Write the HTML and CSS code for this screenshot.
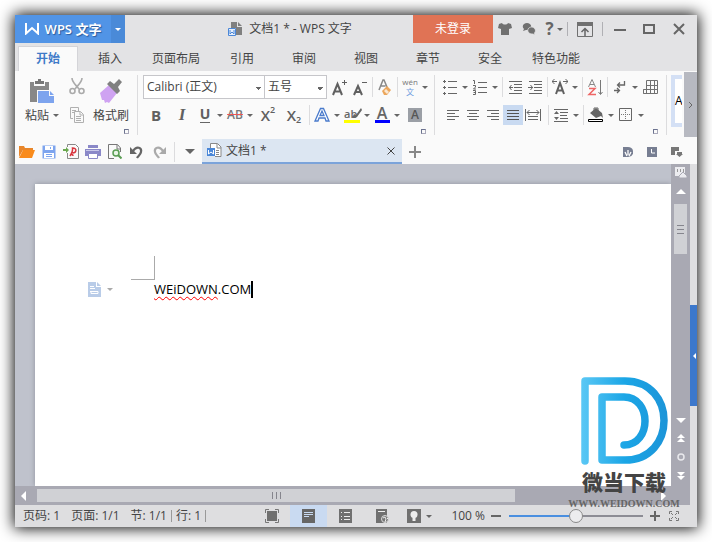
FILE: index.html
```html
<!DOCTYPE html>
<html lang="zh-CN">
<head>
<meta charset="utf-8">
<meta name="viewport" content="width=device-width, initial-scale=1">
<title>文档1 * - WPS 文字</title>
<link rel="stylesheet" href="styles.css">
</head>
<body>
<div class="window">
  <header class="titlebar">
    <button class="brand"><svg width="14" height="12" viewBox="0 0 14 12"><path d="M1 0v10.500L7 5l6 5.500V0" fill="none" stroke="#fff" stroke-width="2"/></svg>WPS 文字</button>
    <button class="brand-menu" aria-label="菜单"><span class="caret light"></span></button>
    <div class="doc-title">
      <svg width="15" height="15" viewBox="0 0 15 15"><path d="M3 0h6v5h5v8H8V6H3z" fill="#808080"/><path d="M10 0l4 4h-4z" fill="#808080"/><path d="M.5 6.500h7v7h-7z" fill="#e8effa" stroke="#4a87d8"/><path d="M2 8v4l2-2 2 2V8" fill="none" stroke="#4a87d8"/></svg>
      <span>文档1 * - WPS 文字</span>
    </div>
    <button class="login">未登录</button>
    <button class="win-btn" aria-label="皮肤"><svg width="14" height="14" viewBox="0 0 14 14"><path d="M4 1C5 3 9 3 10 1l3 1 1 4-3 1v6H3V7L0 6l1-4z" fill="#707070"/></svg></button>
    <button class="win-btn" aria-label="消息"><svg width="14" height="14" viewBox="0 0 14 14"><path d="M1 9l1-2C-1 4 2 1 5 1s6 3 3 6c-2 1-3 1-4 1z" fill="#707070"/><path d="M13 13l-.5-2C15 8 12 5 9.500 5S4 8 7 11c1 1 3 1 4 1z" fill="#707070" stroke="#e3e3e5" stroke-width=".8"/></svg></button>
    <button class="win-btn help" aria-label="帮助"><b>?</b><span class="caret"></span></button>
    <i class="title-sep"></i>
    <button class="win-btn wide" aria-label="隐藏功能区"><svg width="16" height="15" viewBox="0 0 16 15"><path d="M.5.5h15v14H.5z" fill="none" stroke="#707070"/><path d="M0 0h16v4H0z" fill="#707070"/><path d="M8 14V7M4.500 10L8 6.500l3.500 3.500" fill="none" stroke="#666" stroke-width="1.500"/></svg></button>
    <i class="title-sep"></i>
    <button class="win-btn wide" aria-label="最小化"><svg width="12" height="12"><path d="M0 6h12v2H0z" fill="#666"/></svg></button>
    <button class="win-btn" aria-label="最大化"><svg width="12" height="12"><path d="M1 2h10v8H1z" fill="none" stroke="#666" stroke-width="2"/></svg></button>
    <button class="win-btn close" aria-label="关闭"><svg width="12" height="12"><path d="M1 1l10 10M11 1L1 11" stroke="#666" stroke-width="2"/></svg></button>
  </header>

  <nav class="tabs">
    <button class="tab active">开始</button><button class="tab">插入</button><button class="tab long">页面布局</button><button class="tab">引用</button><button class="tab">审阅</button><button class="tab">视图</button><button class="tab">章节</button><button class="tab">安全</button><button class="tab long">特色功能</button>
  </nav>

  <section class="ribbon">
    <div class="group clipboard">
      <button class="big">
        <svg width="26" height="25" viewBox="0 0 26 25"><path d="M1 3h4v4h11V3h4v8H8v12H1z" fill="#888"/><path d="M6 2h3V0h3v2h3v3H6z" fill="#777"/><path d="M9 12h11v5h5v7H9z" fill="#7da4ee"/><path d="M21 12l4 4h-4z" fill="#7da4ee"/></svg>
        <span>粘贴<span class="caret"></span></span>
      </button>
      <div class="stack">
        <button aria-label="剪切"><svg width="16" height="17" viewBox="0 0 16 17"><g fill="none" stroke="#aaa" stroke-width="1.600"><path d="M3 0c0 4 3 6 7 11M13 0c0 4-3 6-7 11"/><circle cx="3.500" cy="13" r="2.500"/><circle cx="12.500" cy="13" r="2.500"/></g></svg></button>
        <button aria-label="复制"><svg width="16" height="17" viewBox="0 0 16 17"><g fill="none" stroke="#b0b0b0"><path d="M4 11.500H1.500v-11h8V4"/><path d="M5.500 4.500h6l3 3v8h-9zM11 5v3h3M7 9.500h5M7 11.500h5M7 13.500h5M3 3.500h4M3 5.500h2"/></g></svg></button>
      </div>
      <button class="big painter">
        <svg width="26" height="25" viewBox="0 0 26 25"><path d="M2 14l9-8 8 8-8 10-2-1-2 1-1-3-2 0z" fill="#cfa3f2"/><path d="M9 5l3-3 4 3 5-5 3 3-4 5 2 4-3 3z" fill="#808080"/></svg>
        <span>格式刷</span>
      </button>
      <i class="launcher"></i>
    </div>

    <div class="group font">
      <div class="row">
        <select class="field font-name" aria-label="字体"><option>Calibri (正文)</option></select><select class="field font-size" aria-label="字号"><option>五号</option></select>
        <button class="tool gap-s" aria-label="增大字号"><svg width="16" height="17"><path d="M1 16L5.500 5 10 16M3 12.500h5" fill="none" stroke="#606060" stroke-width="2"/><path d="M10 3.500h5M12.500 1v5" stroke="#606060"/></svg></button>
        <button class="tool" aria-label="减小字号"><svg width="16" height="17"><path d="M2 16L6 7l4 9M4 13h4" fill="none" stroke="#606060" stroke-width="2"/><path d="M10 3.500h5" stroke="#606060"/></svg></button>
        <i class="sep"></i>
        <button class="tool" aria-label="清除格式"><svg width="16" height="17" viewBox="0 0 16 17"><path d="M2 11L6 1h1l3 7M3.500 7h5" fill="none" stroke="#888" stroke-width="1.500"/><path d="M5 12l5-5 4 4-4 5H7z" fill="#eba65c"/><path d="M7 12l2-2 3 3-2 2z" fill="#fbe8d2"/></svg></button>
        <i class="sep"></i>
        <button class="tool" aria-label="拼音指南"><span class="pinyin"><span>wén</span><b>文</b></span></button>
        <button class="drop" aria-label="拼音选项"><span class="caret"></span></button>
      </div>
      <div class="row second">
        <button class="tool gap-s" aria-label="加粗"><b class="letter">B</b></button>
        <button class="tool gap-m" aria-label="倾斜"><span class="letter italic">I</span></button>
        <button class="tool gap-s" aria-label="下划线"><span class="letter under">U</span></button>
        <button class="drop" aria-label="下划线选项"><span class="caret"></span></button>
        <button class="tool" aria-label="删除线"><span class="strike">AB</span></button>
        <button class="drop" aria-label="删除线选项"><span class="caret"></span></button>
        <button class="tool gap-s" aria-label="上标"><span class="letter script">X<sup>2</sup></span></button>
        <button class="tool gap-m" aria-label="下标"><span class="letter script">X<sub>2</sub></span></button>
        <i class="sep gap-s"></i>
        <button class="tool" aria-label="文字效果"><svg width="16" height="16"><path d="M1 14L6.500 1.500h3L15 14h-3l-1-3H5l-1 3zM6 8.500h4L8 4z" fill="#fff" stroke="#4a7bcc" stroke-width="1.300"/></svg></button>
        <button class="drop" aria-label="文字效果选项"><span class="caret"></span></button>
        <button class="tool" aria-label="突出显示"><span class="mark">ab<svg width="10" height="11"><path d="M9 0l1 2-5 7-3 1H0l2-4 2 1z" fill="#666"/></svg></span></button>
        <button class="drop" aria-label="突出显示选项"><span class="caret"></span></button>
        <button class="tool" aria-label="字体颜色"><span class="color">A</span></button>
        <button class="drop" aria-label="字体颜色选项"><span class="caret"></span></button>
        <button class="tool gap-s" aria-label="字符底纹"><span class="shade">A</span></button>
      </div>
      <i class="launcher"></i>
    </div>

    <div class="group para">
      <div class="row">
        <button class="tool" aria-label="项目符号"><svg width="16" height="16"><path d="M6 2.500h9M6 8.500h9M6 14.500h9" stroke="#666"/><path d="M1 2.500h3M2.500 1v3M1 8.500h3M2.500 7v3M1 14.500h3M2.500 13v3" stroke="#666"/></svg></button>
        <button class="drop" aria-label="项目符号选项"><span class="caret"></span></button>
        <button class="tool" aria-label="编号"><svg width="16" height="17"><path d="M6 3.500h9M6 8.500h9M6 13.500h9" stroke="#666"/><path d="M1 1.500h1.500V5M1 6.500h2.500v1.500l-2 2h2.500M1 11.500h2.500v4H1M1.500 13.500h2" fill="none" stroke="#666"/></svg></button>
        <button class="drop" aria-label="编号选项"><span class="caret"></span></button>
        <i class="sep"></i>
        <button class="tool" aria-label="减少缩进"><svg width="14" height="14"><path d="M1 1.500h13M6 4.500h8M6 7.500h8M6 10.500h8M1 13.500h13M1 7.500h4M3.500 5l-2 2.500 2 2.500" fill="none" stroke="#666"/></svg></button>
        <button class="tool" aria-label="增加缩进"><svg width="14" height="14"><path d="M1 1.500h13M6 4.500h8M6 7.500h8M6 10.500h8M1 13.500h13M0 7.500h5M2.500 5l2 2.500-2 2.500" fill="none" stroke="#666"/></svg></button>
        <i class="sep"></i>
        <button class="tool" aria-label="中文版式"><svg width="16" height="16"><path d="M4 15L8 4l4 11M5 11.500h6" fill="none" stroke="#606060" stroke-width="2"/><path d="M0 2.500h5M2.500 0L0 2.500 2.500 5M11 2.500h5M13.500 0L16 2.500 13.500 5" fill="none" stroke="#666"/></svg></button>
        <button class="drop" aria-label="中文版式选项"><span class="caret"></span></button>
        <i class="sep"></i>
        <button class="tool" aria-label="排序"><svg width="16" height="17"><path d="M1.500 8L5 .5 8.500 8M3 5.500h4" fill="none" stroke="#888"/><path d="M2 9.500h6L2 15.500h7" fill="none" stroke="#e66" stroke-width="1.500"/><path d="M13.500 1v14M11.500 13l2 2.500 2-2.500" fill="none" stroke="#777"/></svg></button>
        <i class="sep"></i>
        <button class="tool" aria-label="显示标记"><svg width="14" height="14"><path d="M11.500 1v4H5M7 2.500L4.500 5 7 7.500M1 10.500h5M4 8l2.500 2.500L4 13" fill="none" stroke="#666" stroke-width="1.300"/></svg></button>
        <button class="drop" aria-label="显示标记选项"><span class="caret"></span></button>
        <button class="tool" aria-label="插入表格"><svg width="15" height="15"><path d="M3.500.5h11v13H.5v-4h14M3.500 13V.5M7.500 0v13M11.500 0v13M3 5.500h12M.5 9.500v4" fill="none" stroke="#707070"/></svg></button>
      </div>
      <div class="row second">
        <button class="tool gap-s" aria-label="左对齐"><svg width="14" height="12"><path d="M1 1.500h12M1 4.500h8M1 7.500h12M1 10.500h8" stroke="#666"/></svg></button>
        <button class="tool" aria-label="居中"><svg width="14" height="12"><path d="M1 1.500h12M3 4.500h8M1 7.500h12M3 10.500h8" stroke="#666"/></svg></button>
        <button class="tool" aria-label="右对齐"><svg width="14" height="12"><path d="M1 1.500h12M5 4.500h8M1 7.500h12M5 10.500h8" stroke="#666"/></svg></button>
        <button class="tool on" aria-label="两端对齐"><svg width="14" height="12"><path d="M1 1.500h12M1 4.500h12M1 7.500h12M1 10.500h12" stroke="#555"/></svg></button>
        <button class="tool" aria-label="分散对齐"><svg width="16" height="12"><path d="M.5 0v12M15.500 0v12M3 7.500h10M3 10.500h10M2 3.500h12M4.500 1L2 3.500 4.500 6M11.500 1L14 3.500 11.500 6" fill="none" stroke="#666"/></svg></button>
        <i class="sep gap-s"></i>
        <button class="tool" aria-label="行距"><svg width="14" height="14"><path d="M0 1.500h14M6 4.500h8M6 7.500h7M6 10.500h8M0 13.500h14" stroke="#666"/><path d="M0 6l2.500-3L5 6zM0 9h5l-2.500 3z" fill="#666"/></svg></button>
        <button class="drop" aria-label="行距选项"><span class="caret"></span></button>
        <i class="sep"></i>
        <button class="tool" aria-label="底纹颜色"><svg width="16" height="16"><path d="M2 6l6-5 6 5 1 5-2-2-5 2z" fill="#666"/><path d="M6 4V1h4v3" fill="none" stroke="#666"/><path d="M.5 12.500h14v2H.5z" fill="#fff" stroke="#000"/></svg></button>
        <button class="drop" aria-label="底纹选项"><span class="caret"></span></button>
        <button class="tool" aria-label="边框"><svg width="14" height="14"><path d="M.5.5h12v12H.5z" fill="none" stroke="#666"/><path d="M6.500 2v10M2 6.500h10" stroke="#777" stroke-dasharray="1 1"/></svg></button>
        <button class="drop" aria-label="边框选项"><span class="caret"></span></button>
      </div>
      <i class="launcher"></i>
    </div>
    <div class="styles"><button>A</button></div>
    <button class="ribbon-next" aria-label="更多"><svg width="5" height="8"><path d="M1 1l3 3-3 3" fill="none" stroke="#666"/></svg></button>
  </section>

  <div class="quickbar">
    <button class="quick" aria-label="打开"><svg width="16" height="14"><path d="M0 12V1h5l1 2h8v2H4z" fill="#e8862a"/><path d="M4 5h12l-3 8H0z" fill="#f98b1c"/></svg></button>
    <button class="quick" aria-label="保存"><svg width="14" height="14"><path d="M.5.500h13v13H.5z" fill="#7da4ee"/><path d="M3 1h8v4H3zM2 8h10v5H2z" fill="#fff"/><path d="M4 9.500h6M4 11.500h6M8.500 2v2" stroke="#7da4ee"/></svg></button>
    <button class="quick" aria-label="输出为PDF"><svg width="16" height="15"><path d="M4.500 3V.5h8l3 3v11h-11V9" fill="none" stroke="#888"/><path d="M0 5h3V3l3 3-3 3V7H0z" fill="#6aa84f"/><path d="M7 12c2-3 3-5 2.500-8 5 0 4 5 0 5M7 12c1-2 3-2 3 0" fill="none" stroke="#d9363e" stroke-width="1.500"/></svg></button>
    <button class="quick" aria-label="打印"><svg width="16" height="14"><path d="M3 0h10v3H3zM0 4h16v7H0z" fill="#8a88c8"/><path d="M3.500 8.500h9v5h-9z" fill="#fff" stroke="#8a88c8"/><path d="M1 5.500h13" stroke="#c8c8ea"/></svg></button>
    <button class="quick" aria-label="打印预览"><svg width="14" height="15"><path d="M12.500 8V4l-3-3.500H.5v14H6" fill="none" stroke="#777"/><path d="M9 1v4h4" fill="none" stroke="#777"/><circle cx="8" cy="9" r="3" fill="#eaf6e8" stroke="#5a9e54" stroke-width="1.500"/><path d="M10 11l3.500 3.500" stroke="#5a9e54" stroke-width="2"/></svg></button>
    <button class="quick" aria-label="撤销"><svg width="14" height="14"><path d="M3 6c4-6 9-3 8 1-.5 3-3 4-4 6" fill="none" stroke="#666" stroke-width="2.200"/><path d="M0 2v7h7z" fill="#666"/></svg></button>
    <button class="quick" aria-label="恢复"><svg width="14" height="14"><path d="M11 6C7 0 2 3 3 7c.5 3 3 4 4 6" fill="none" stroke="#aaa" stroke-width="2.200"/><path d="M14 2v7H7z" fill="#aaa"/></svg></button>
    <i class="sep quick-sep"></i>
    <button class="quick more" aria-label="自定义"><span class="caret large"></span></button>
    <div class="doc-tab">
      <svg width="15" height="15"><path d="M3.500 6V.5h7l3.500 3.500v9.500H8" fill="#fff" stroke="#888"/><path d="M10 1v4h4M9 7.500h3M9 9.500h3M9 11.500h3" fill="none" stroke="#888"/><path d="M0 5h8v8H0z" fill="#4a87d8"/><path d="M1.500 7v4L4 9l2.500 2V7" fill="none" stroke="#fff"/></svg>
      <span>文档1 *</span>
      <button aria-label="关闭文档"><svg width="8" height="8"><path d="M.5.5l7 7M7.500.5l-7 7" stroke="#444"/></svg></button>
    </div>
    <button class="new-tab" aria-label="新建"><svg width="12" height="12"><path d="M6 0v12M0 6h12" stroke="#888" stroke-width="2"/></svg></button>
    <div class="quick-right">
      <button aria-label="文档漫游"><svg width="10" height="10"><path d="M0 0h5c7 0 7 10 0 10H0z" fill="#777e92"/><path d="M4 9L2 5M5 8V3M6 9l2-4" stroke="#fff" stroke-width="1.300"/></svg></button>
      <button aria-label="历史"><svg width="10" height="10"><path d="M0 0h10v10H0z" fill="#777e92"/><path d="M4.500 2v4H8" fill="none" stroke="#fff"/></svg></button>
      <button aria-label="窗口列表"><svg width="12" height="10"><path d="M0 0h8v4H4v4H0z" fill="#777"/><path d="M6 5h5v2h1l-3.500 3L5 7h1z" fill="#777"/></svg></button>
    </div>
  </div>

  <main class="workspace">
    <div class="canvas">
      <article class="page">
        <div class="corner"></div>
        <div class="line">
          <button class="para-menu" aria-label="段落布局"><svg width="13" height="15"><path d="M0 0h8v5h5v10H0z" fill="#b9cce8"/><path d="M9 0l4 4H9z" fill="#b9cce8"/><path d="M2 4.500h4M2 6.500h5M2 9.500h8v2H3v-2" fill="none" stroke="#fff"/></svg><span class="caret faint"></span></button>
          <p><span class="typo">WEiDOWN</span>.COM<span class="cursor"></span></p>
        </div>
      </article>
    </div>
    <div class="vscroll">
      <svg class="ruler" width="14" height="14"><path d="M1 1h10v9H1z" fill="#ececf0"/><path d="M3.500 3v3M6.500 3v3M9.500 3v3" stroke="#999"/><path d="M5 10l4-4 4 4v2H5z" fill="#ececf0" stroke="#a9a9b3"/></svg>
      <svg width="10" height="5"><path d="M5 0l5 5H0z" fill="#fff"/></svg>
      <div class="vthumb"></div>
      <div class="vtools">
        <svg width="10" height="5"><path d="M0 0h10L5 5z" fill="#fff"/></svg>
        <svg width="8" height="8"><path d="M4 0l4 4H0zM4 4l4 4H0z" fill="#fff"/></svg>
        <svg width="8" height="8"><circle cx="4" cy="4" r="3" fill="none" stroke="#e8e8ec" stroke-width="1.500"/></svg>
        <svg width="8" height="8"><path d="M0 0h8L4 4zM0 4h8L4 8z" fill="#fff"/></svg>
      </div>
    </div>
    <div class="side"><button aria-label="展开任务窗格"><svg width="4" height="6"><path d="M4 0v6L1 3z" fill="#fff"/></svg></button></div>
    <div class="hscroll">
      <svg width="5" height="10"><path d="M5 0v10L0 5z" fill="#fff"/></svg>
      <div class="htrack"><div class="hthumb"></div></div>
      <svg width="5" height="10"><path d="M0 0v10l5-5z" fill="#fff"/></svg>
    </div>
  </main>

  <footer class="status">
    <div class="info"><span>页码: 1</span><span>页面: 1/1</span><span class="bar">节: 1/1</span><span class="bar tight">行: 1</span></div>
    <div class="views">
      <button aria-label="全屏显示"><svg width="14" height="14"><path d="M2 2h10v10H2z" fill="#707070"/><path d="M.5 4V.5H4M10 .5h3.500V4M13.500 10v3.500H10M4 13.500H.5V10" fill="none" stroke="#777"/></svg></button>
      <button class="on" aria-label="页面视图"><svg width="13" height="14"><path d="M0 0h13v14H0z" fill="#666"/><path d="M2 3.500h9M2 5.500h9M2 7.500h5" stroke="#c8daf2"/></svg></button>
      <button aria-label="大纲"><svg width="13" height="14"><path d="M0 0h13v14H0z" fill="#707070"/><path d="M2 3.500h1M5 3.500h6M2 7.500h1M5 7.500h6M2 10.500h1M5 10.500h6" stroke="#eee"/></svg></button>
      <button aria-label="Web版式"><svg width="13" height="14"><path d="M0 0h11v14H0z" fill="#707070"/><path d="M2 2.500h7" stroke="#eee"/><circle cx="9" cy="10" r="3.500" fill="#777" stroke="#ddd"/><path d="M7 9l2-1 1 2-1 3M11 9l1 1" fill="none" stroke="#eee"/></svg></button>
      <button aria-label="护眼模式"><svg width="14" height="14"><path d="M0 0h14v14H0z" fill="#707070"/><circle cx="7" cy="5.500" r="3.500" fill="#eee"/><path d="M5.500 8h3v4h-3z" fill="#eee"/></svg><span class="caret"></span></button>
    </div>
    <label class="zoom-label" for="zoom">100 %</label>
    <button class="zoom-btn" aria-label="缩小"><svg width="10" height="10"><path d="M0 5h10" stroke="#666" stroke-width="2"/></svg></button>
    <input id="zoom" class="zoom" type="range" min="0" max="200" value="100">
    <button class="zoom-btn" aria-label="放大"><svg width="10" height="10"><path d="M5 0v10M0 5h10" stroke="#666" stroke-width="2"/></svg></button>
    <button class="zoom-btn" aria-label="最佳缩放"><svg width="10" height="10"><path d="M.5 3V.5H3M7 .5h2.500V3M9.500 7v2.500H7M3 9.500H.5V7M2 2l2 2M8 2L6 4M2 8l2-2M8 8L6 6" fill="none" stroke="#777"/></svg></button>
  </footer>

  <div class="watermark">
    <svg width="87" height="88" viewBox="0 0 87 88"><defs><linearGradient id="blue" gradientUnits="userSpaceOnUse" x1="0" x2="87" y1="0" y2="0"><stop offset="0" stop-color="#5bc8f5"/><stop offset=".5" stop-color="#1ba6e6"/><stop offset="1" stop-color="#1c94d8"/></linearGradient></defs><path d="M4 84V4h40c52 0 52 79 0 79H21V20h22c28 0 28 48 0 48" fill="none" stroke="url(#blue)" stroke-width="7.500" stroke-linecap="round" stroke-linejoin="round"/></svg>
    <strong>微当下载</strong>
    <span>WWW.WEIDOWN.COM</span>
  </div>
</div>
</body>
</html>
```
FILE: styles.css
```css
* { box-sizing: border-box; }
body {
  margin: 0;
  padding: 15px;
  background: #fff;
  color: #444;
  font: 12px/16px "Open Sans", "Noto Sans CJK SC", sans-serif;
}
button {
  display: flex;
  align-items: center;
  justify-content: center;
  flex: none;
  margin: 0;
  padding: 0;
  border: 0;
  background: none;
  color: inherit;
  font: inherit;
}
svg { display: block; flex: none; }
.window {
  position: relative;
  display: flex;
  flex-direction: column;
  min-height: calc(100vh - 30px);
  background: #fafafa;
  box-shadow: 0 0 14px 1px #000;
}
.caret {
  display: inline-block;
  flex: none;
  border: 3px solid transparent;
  border-top-color: #666;
  border-bottom: 0;
}
.caret.light { border-top-color: #fff; }
.caret.faint { border-top-color: #aaa; }
.caret.large { border-width: 5px 5px 0; }

/* title bar */
.titlebar { display: flex; align-items: center; height: 28px; background: #e3e3e5; }
.brand {
  width: 96px;
  height: 28px;
  gap: 6px;
  background: #5194e6;
  color: #fff;
  font-size: 13px;
  font-weight: 600;
  text-shadow: 1px 1px 1px #2c5c9c;
}
.brand-menu { width: 14px; height: 28px; background: #4a8ad8; }
.doc-title { display: flex; flex: 1; align-items: center; justify-content: center; gap: 6px; padding-left: 42px; white-space: nowrap; }
.login { width: 80px; height: 28px; background: #e07355; color: #fff; }
.win-btn { width: 24px; height: 28px; }
.win-btn.wide { width: 32px; }
.win-btn.close { width: 36px; }
.win-btn.help { gap: 3px; width: 26px; font-size: 17px; color: #666; }
.title-sep { width: 1px; height: 14px; background: #b0b0b4; }
.title-sep + .wide { width: 34px; }

/* tabs */
.tabs { display: flex; height: 28px; padding: 3px 2px 0; background: #e3e3e5; }
.tab { width: 62px; height: 25px; }
.tab.long { width: 70px; }
.tab.active { width: 60px; margin: 0 1px; border: 1px solid #d4d4d8; border-bottom: 0; background: #fafafa; color: #3f7bc8; font-weight: 600; }

/* ribbon */
.ribbon { display: flex; height: 68px; overflow: hidden; }
.group { position: relative; flex: none; height: 60px; margin-top: 4px; border-right: 1px solid #dcdcde; }
.launcher { position: absolute; right: 8px; bottom: 1px; width: 5px; height: 5px; border: 1px solid #6c7390; border-right-color: #aab; border-bottom-color: #aab; }
.clipboard { display: flex; width: 123px; padding-left: 6px; }
.big { flex-direction: column; justify-content: flex-start; width: 42px; padding-top: 4px; gap: 4px; white-space: nowrap; }
.big .caret { margin: 0 0 3px 4px; }
.painter { margin-left: 5px; }
.stack { display: flex; flex-direction: column; gap: 12px; width: 22px; padding-top: 3px; align-items: flex-end; }
.font { width: 297px; padding-left: 5px; }
.para { width: 232px; padding-left: 5px; }
.row { display: flex; align-items: center; height: 24px; }
.second { margin-top: 6px; height: 20px; }
.field {
  appearance: none;
  height: 24px;
  margin: 0;
  padding: 0 14px 0 3px;
  border: 1px solid #c6c6ca;
  border-radius: 0;
  background: linear-gradient(45deg, transparent 50%, #666 50%) right 6px top 11px / 3px 3px no-repeat, linear-gradient(315deg, transparent 50%, #666 50%) right 3px top 11px / 3px 3px no-repeat, #fff;
  color: #444;
  font: inherit;
}
.font-name { width: 122px; }
.font-size { width: 62px; border-left: 0; }
.tool { width: 20px; height: 20px; }
.tool.on { background: #c9daf1; }
.drop { width: 10px; height: 20px; }
.gap-s { margin-left: 3px; }
.gap-m { margin-left: 6px; }
.sep { flex: none; width: 5px; height: 20px; background: linear-gradient(#dcdcde, #dcdcde) center / 1px 100% no-repeat; }
.letter { color: #606060; font-size: 15px; font-weight: 700; line-height: 20px; white-space: nowrap; }
.script { display: flex; font-weight: 600; }
.letter sup, .letter sub { font-size: 9px; line-height: 10px; }
.letter sup { align-self: flex-start; }
.letter sub { align-self: flex-end; }
.italic { font-family: "Liberation Serif", serif; font-style: italic; font-size: 17px; }
.under { height: 16px; border-bottom: 1px solid #666; font-size: 14px; line-height: 14px; }
.strike { color: #777; font-weight: 600; font-size: 12px; text-decoration: line-through #e55; }
.mark { display: flex; align-items: center; width: 16px; border-bottom: 3px solid #ff0; color: #666; font-weight: 600; font-size: 11px; line-height: 13px; }
.mark svg { margin-left: -5px; }
.color { width: 15px; border-bottom: 3px solid #00f; color: #666; font-weight: 600; font-size: 16px; line-height: 13px; }
.shade { width: 14px; height: 14px; background: #9b9fa6; color: #555; font-weight: 600; line-height: 14px; }
.pinyin { display: flex; flex-direction: column; align-items: center; color: #777; font-size: 8px; line-height: 10px; }
.pinyin b { color: #6d9ae0; font-weight: 400; }
.styles { flex: 1; min-width: 0; margin: 4px 2px 12px 4px; padding: 4px 0 4px 4px; overflow: hidden; background: #d4e0f5; }
.styles button { width: 100%; height: 100%; justify-content: flex-start; background: #fff; color: #000; }
.ribbon-next { width: 13px; height: 65px; margin-top: 1px; background: #b7b9c1; }

/* quick access and document tabs */
.quickbar { display: flex; align-items: center; height: 25px; padding-left: 1px; }
.quick { width: 22px; height: 25px; }
.quick-sep { height: 20px; margin-left: 2px; }
.quick.more { width: 25px; }
.doc-tab { display: flex; align-items: center; gap: 4px; flex: 0 1 200px; height: 25px; padding: 0 6px 0 5px; border-bottom: 2px solid #7ba3da; background: #dce6f2; }
.doc-tab button { width: 10px; margin-left: auto; }
.new-tab { width: 26px; height: 25px; }
.quick-right { display: flex; gap: 14px; margin-left: auto; padding-right: 14px; }

/* document area */
.workspace { display: grid; flex: 1; grid-template: minmax(0, 1fr) 19px / minmax(0, 1fr) 19px 7px; }
.canvas { padding: 20px 0 0 20px; overflow: hidden; background: #bfc2cc; }
.page { height: 100%; padding-top: 72px; background: #fff; box-shadow: 0 0 5px #8f929c; }
.corner { width: 24px; height: 24px; margin-left: 96px; border: solid #aaa; border-width: 0 1px 1px 0; }
.line { display: flex; align-items: center; margin: 1px 0 0 53px; }
.para-menu { justify-content: flex-start; width: 66px; gap: 6px; }
.line p { display: flex; margin: 0; color: #000; font-size: 13px; line-height: 17px; }
.typo { text-decoration: underline wavy #f00 1px; text-underline-offset: 2px; text-decoration-skip-ink: none; }
.cursor { width: 2px; height: 17px; background: #000; }
.vscroll { display: flex; flex-direction: column; align-items: center; background: #a9a9b3; }
.ruler { margin: 2px 0 9px; }
.vthumb { width: 13px; height: 50px; margin-top: 10px; background: repeating-linear-gradient(#85858d 0 1px, transparent 1px 4px) center / 7px 9px no-repeat, #d0d1d5; }
.vtools { display: flex; flex-direction: column; align-items: center; gap: 11px; margin: auto 0 6px; }
.side { grid-row: 1 / 3; grid-column: 3; display: flex; align-items: center; padding-top: 42px; background: #dedee0; }
.side button { width: 7px; height: 101px; background: #3c78cc; }
.hscroll { display: flex; align-items: center; grid-column: 1 / 3; gap: 11px; padding: 0 24px 0 6px; background: #a9a9b3; }
.htrack { flex: 1; }
.hthumb { width: 78%; height: 13px; background: repeating-linear-gradient(90deg, #85858d 0 1px, transparent 1px 4px) center / 9px 7px no-repeat, #d0d1d5; }

/* status bar */
.status { display: flex; align-items: center; height: 22px; padding: 0 18px 0 8px; background: #dedee0; white-space: nowrap; }
.info { display: flex; align-items: center; gap: 11px; }
.bar { padding-right: 4px; border-right: 1px solid #999; line-height: 12px; }
.bar.tight { margin-left: -7px; }
.views { display: flex; margin-left: auto; }
.views button { width: 37px; height: 22px; gap: 5px; }
.views .on { background: #c9daf1; }
.zoom-label { margin: 0 6px 0 13px; }
.zoom-btn { width: 10px; height: 20px; }
.zoom-btn + .zoom-btn { margin-left: 9px; }
.zoom { appearance: none; width: 134px; height: 20px; margin: 0 7px 0 8px; background: linear-gradient(90deg, #4a8fe0 50%, #8c8c94 50%) center / 100% 2px no-repeat; }
.zoom::-webkit-slider-thumb { appearance: none; width: 14px; height: 14px; border: 1px solid #888; border-radius: 50%; background: #ececee; }

/* site mark over the lower right corner */
.watermark { position: absolute; right: 18px; bottom: 17px; display: flex; flex-direction: column; align-items: center; width: 110px; pointer-events: none; color: #444; }
.watermark strong { margin-top: 4px; font: 900 21px/24px "Noto Sans CJK SC", sans-serif; }
.watermark span { margin-top: 5px; color: #666; font: 700 10px/12px "Liberation Serif", serif; }
```
